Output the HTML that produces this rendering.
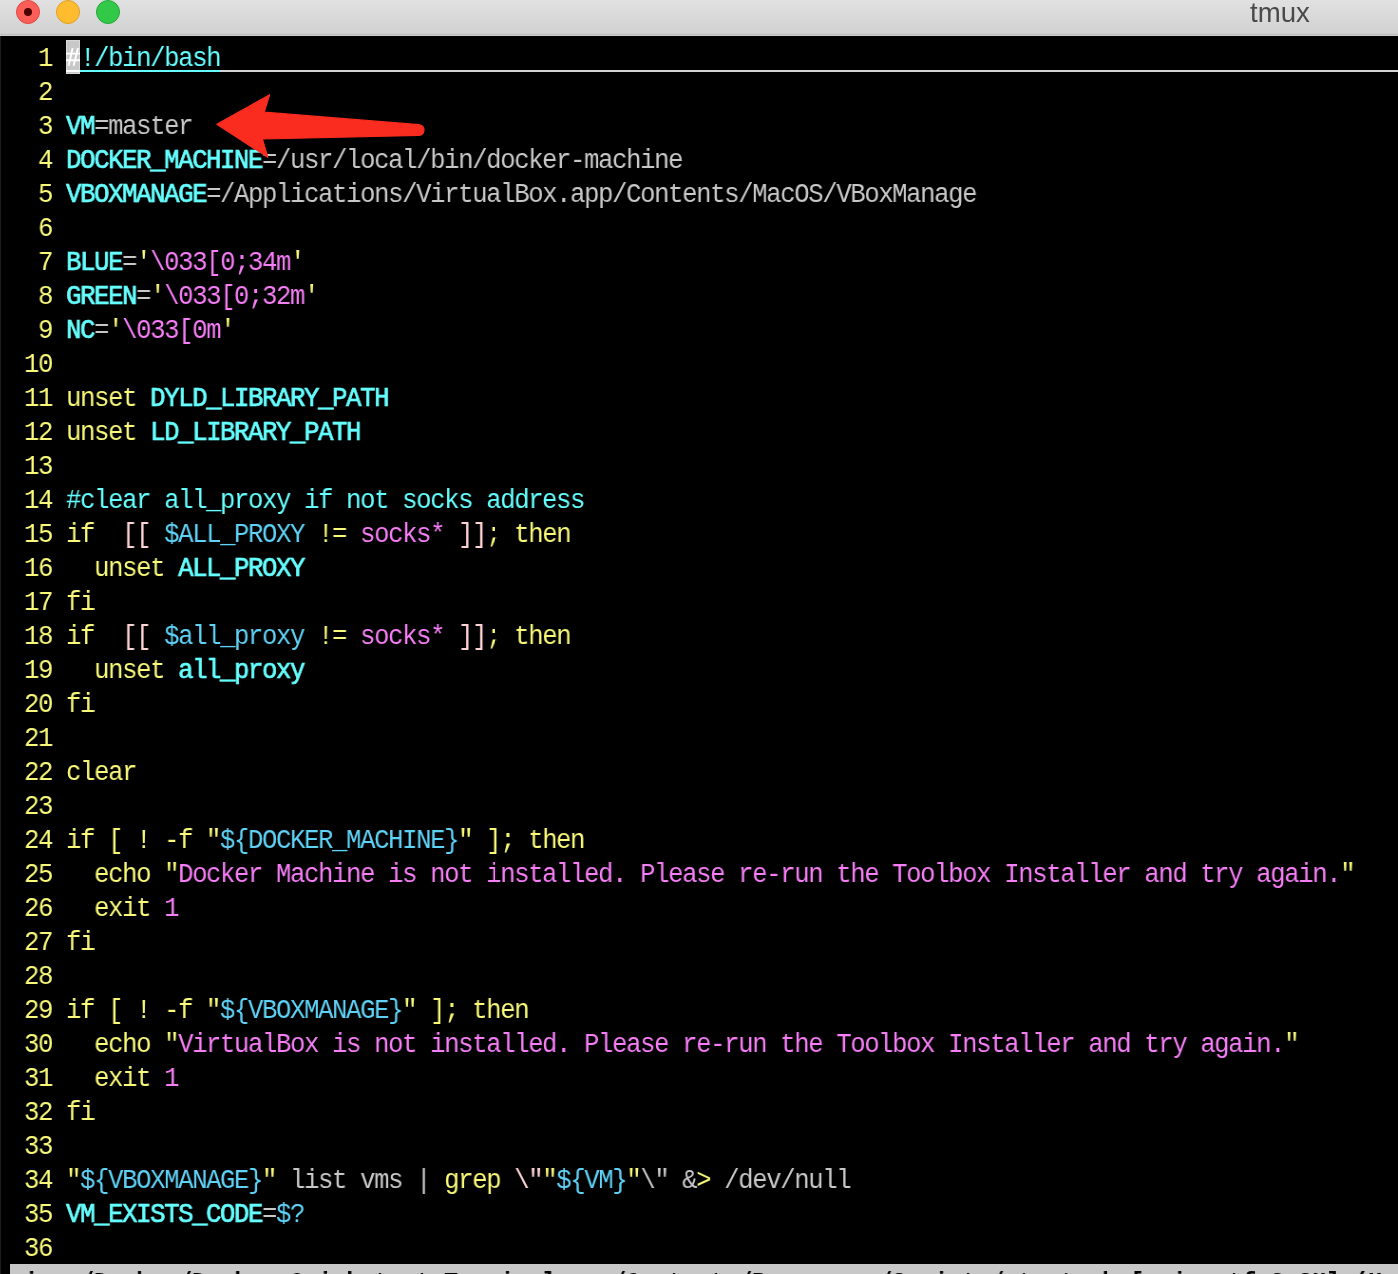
<!DOCTYPE html>
<html><head><meta charset="utf-8"><style>
html,body{margin:0;padding:0;}
body{width:1398px;height:1274px;background:#000;overflow:hidden;position:relative;font-family:"Liberation Mono",monospace;}
#tb{position:absolute;left:0;top:0;width:1398px;height:36px;background:linear-gradient(#e1e1e1,#d0d0d0);}
#tb:after{content:"";position:absolute;left:0;right:0;top:34px;height:1px;background:#bdbdbd;}
#tb:before{content:"";position:absolute;left:0;right:0;top:35px;height:1px;background:#cfcfcf;}
.tl{position:absolute;top:0px;width:24px;height:24px;border-radius:50%;box-sizing:border-box;}
.r{left:16px;background:#fd5f58;border:1px solid #de4a42;}
.yl{left:56px;background:#febc2e;border:1px solid #e0a028;}
.gr{left:96px;background:#33c948;border:1px solid #24a83a;}
.dot{position:absolute;left:7px;top:7px;width:8px;height:8px;border-radius:50%;background:#4d0000;}
#title{position:absolute;left:1250px;top:-5.5px;will-change:transform;font-family:"Liberation Sans",sans-serif;font-size:27.6px;color:#4a4a4a;line-height:36px;}
#lb{position:absolute;left:0;top:36px;width:1px;height:1238px;background:#1c1c1c;}
.ln{position:absolute;left:10px;height:34px;line-height:34px;font-size:27px;letter-spacing:-1.463px;white-space:pre;transform:scaleX(0.95);transform-origin:0 0;will-change:transform;}
.y{color:#f9f97a}
.cb{color:#66ffff;-webkit-text-stroke:0.7px #66ffff}
.c{color:#66ffff}
.g{color:#c8c8c8}
.m{color:#f77ef7}
.b{color:#5fd3f7}
.p{color:#ffd4d4}
.cur{color:#fff;}
#cursor{position:absolute;left:66px;top:40px;width:14px;height:34px;background:#c8c8c8;box-shadow:inset 0 0 0 1px #d8d8d8;}
#cul{position:absolute;left:66px;top:70px;width:1332px;height:2px;background:#d4d4d4;}
#cul:before{content:"";position:absolute;left:14px;top:0;width:140px;height:2px;background:#66ffff;}
#cul:after{content:"";position:absolute;left:0;top:0;width:14px;height:2px;background:#fff;}
#st{position:absolute;left:10px;top:1264px;width:1388px;height:34px;background:#c8c8c8;overflow:hidden;}
.stt{position:absolute;left:0;top:2px;line-height:34px;font-size:26.5px;font-weight:bold;color:#000;white-space:pre;transform:scaleX(0.8805);transform-origin:0 0;will-change:transform;}
#arrow{position:absolute;left:0;top:0;}

</style></head><body>
<div id="tb"><div class="tl r"><div class="dot"></div></div><div class="tl yl"></div><div class="tl gr"></div><div id="title">tmux</div></div>
<div id="lb"></div>
<div id="cursor"><svg width="14" height="34" viewBox="0 0 14 34" style="position:absolute;left:0;top:0"><g stroke="#fff" stroke-width="1.9" fill="none"><path d="M0 13.6H14M0 20.2H14"/><path d="M6.6 8.1L2.6 25.7M12 8.1L7.6 25.7"/></g></svg></div>
<div id="cul"></div>
<div class="ln" style="top:42px"><span class="y">  1 </span><span class="cur"> </span><span class="c ul">!/bin/bash</span></div>
<div class="ln" style="top:76px"><span class="y">  2 </span></div>
<div class="ln" style="top:110px"><span class="y">  3 </span><span class="cb">VM</span><span class="g">=master</span></div>
<div class="ln" style="top:144px"><span class="y">  4 </span><span class="cb">DOCKER_MACHINE</span><span class="g">=/usr/local/bin/docker-machine</span></div>
<div class="ln" style="top:178px"><span class="y">  5 </span><span class="cb">VBOXMANAGE</span><span class="g">=/Applications/VirtualBox.app/Contents/MacOS/VBoxManage</span></div>
<div class="ln" style="top:212px"><span class="y">  6 </span></div>
<div class="ln" style="top:246px"><span class="y">  7 </span><span class="cb">BLUE</span><span class="g">=</span><span class="y">'</span><span class="m">\033[0;34m</span><span class="y">'</span></div>
<div class="ln" style="top:280px"><span class="y">  8 </span><span class="cb">GREEN</span><span class="g">=</span><span class="y">'</span><span class="m">\033[0;32m</span><span class="y">'</span></div>
<div class="ln" style="top:314px"><span class="y">  9 </span><span class="cb">NC</span><span class="g">=</span><span class="y">'</span><span class="m">\033[0m</span><span class="y">'</span></div>
<div class="ln" style="top:348px"><span class="y"> 10 </span></div>
<div class="ln" style="top:382px"><span class="y"> 11 </span><span class="y">unset </span><span class="cb">DYLD_LIBRARY_PATH</span></div>
<div class="ln" style="top:416px"><span class="y"> 12 </span><span class="y">unset </span><span class="cb">LD_LIBRARY_PATH</span></div>
<div class="ln" style="top:450px"><span class="y"> 13 </span></div>
<div class="ln" style="top:484px"><span class="y"> 14 </span><span class="c">#clear all_proxy if not socks address</span></div>
<div class="ln" style="top:518px"><span class="y"> 15 </span><span class="y">if  </span><span class="p">[[ </span><span class="b">$ALL_PROXY </span><span class="y">!= </span><span class="m">socks* </span><span class="p">]]</span><span class="y">; then</span></div>
<div class="ln" style="top:552px"><span class="y"> 16 </span><span class="y">  unset </span><span class="cb">ALL_PROXY</span></div>
<div class="ln" style="top:586px"><span class="y"> 17 </span><span class="y">fi</span></div>
<div class="ln" style="top:620px"><span class="y"> 18 </span><span class="y">if  </span><span class="p">[[ </span><span class="b">$all_proxy </span><span class="y">!= </span><span class="m">socks* </span><span class="p">]]</span><span class="y">; then</span></div>
<div class="ln" style="top:654px"><span class="y"> 19 </span><span class="y">  unset </span><span class="cb">all_proxy</span></div>
<div class="ln" style="top:688px"><span class="y"> 20 </span><span class="y">fi</span></div>
<div class="ln" style="top:722px"><span class="y"> 21 </span></div>
<div class="ln" style="top:756px"><span class="y"> 22 </span><span class="y">clear</span></div>
<div class="ln" style="top:790px"><span class="y"> 23 </span></div>
<div class="ln" style="top:824px"><span class="y"> 24 </span><span class="y">if [ ! -f "</span><span class="b">${DOCKER_MACHINE}</span><span class="y">" ]; then</span></div>
<div class="ln" style="top:858px"><span class="y"> 25 </span><span class="y">  echo "</span><span class="m">Docker Machine is not installed. Please re-run the Toolbox Installer and try again.</span><span class="y">"</span></div>
<div class="ln" style="top:892px"><span class="y"> 26 </span><span class="y">  exit </span><span class="m">1</span></div>
<div class="ln" style="top:926px"><span class="y"> 27 </span><span class="y">fi</span></div>
<div class="ln" style="top:960px"><span class="y"> 28 </span></div>
<div class="ln" style="top:994px"><span class="y"> 29 </span><span class="y">if [ ! -f "</span><span class="b">${VBOXMANAGE}</span><span class="y">" ]; then</span></div>
<div class="ln" style="top:1028px"><span class="y"> 30 </span><span class="y">  echo "</span><span class="m">VirtualBox is not installed. Please re-run the Toolbox Installer and try again.</span><span class="y">"</span></div>
<div class="ln" style="top:1062px"><span class="y"> 31 </span><span class="y">  exit </span><span class="m">1</span></div>
<div class="ln" style="top:1096px"><span class="y"> 32 </span><span class="y">fi</span></div>
<div class="ln" style="top:1130px"><span class="y"> 33 </span></div>
<div class="ln" style="top:1164px"><span class="y"> 34 </span><span class="y">"</span><span class="b">${VBOXMANAGE}</span><span class="y">"</span><span class="g"> list vms | </span><span class="y">grep</span><span class="g"> </span><span class="p">\"</span><span class="y">"</span><span class="b">${VM}</span><span class="y">"</span><span class="g">\" &amp;</span><span class="y">&gt;</span><span class="g"> /dev/null</span></div>
<div class="ln" style="top:1198px"><span class="y"> 35 </span><span class="cb">VM_EXISTS_CODE</span><span class="g">=</span><span class="b">$?</span></div>
<div class="ln" style="top:1232px"><span class="y"> 36 </span></div>
<div id="st"><div class="stt"> ions/Docker/Docker Quickstart Terminal.app/Contents/Resources/Scripts/start.sh [unix utf-8 SH] (U</div></div>
<svg id="arrow" width="1398" height="1274" viewBox="0 0 1398 1274"><path d="M216.8 124.3 L269.6 94.7 L264.2 112.2 L418.9 124.7 Q424 125.5 424 130 Q424 135 418.9 135.4 L262.4 139 L267.8 157.3 Z" fill="#f92c1f" stroke="#f92c1f" stroke-width="1.2" stroke-linejoin="round"/></svg>
</body></html>
